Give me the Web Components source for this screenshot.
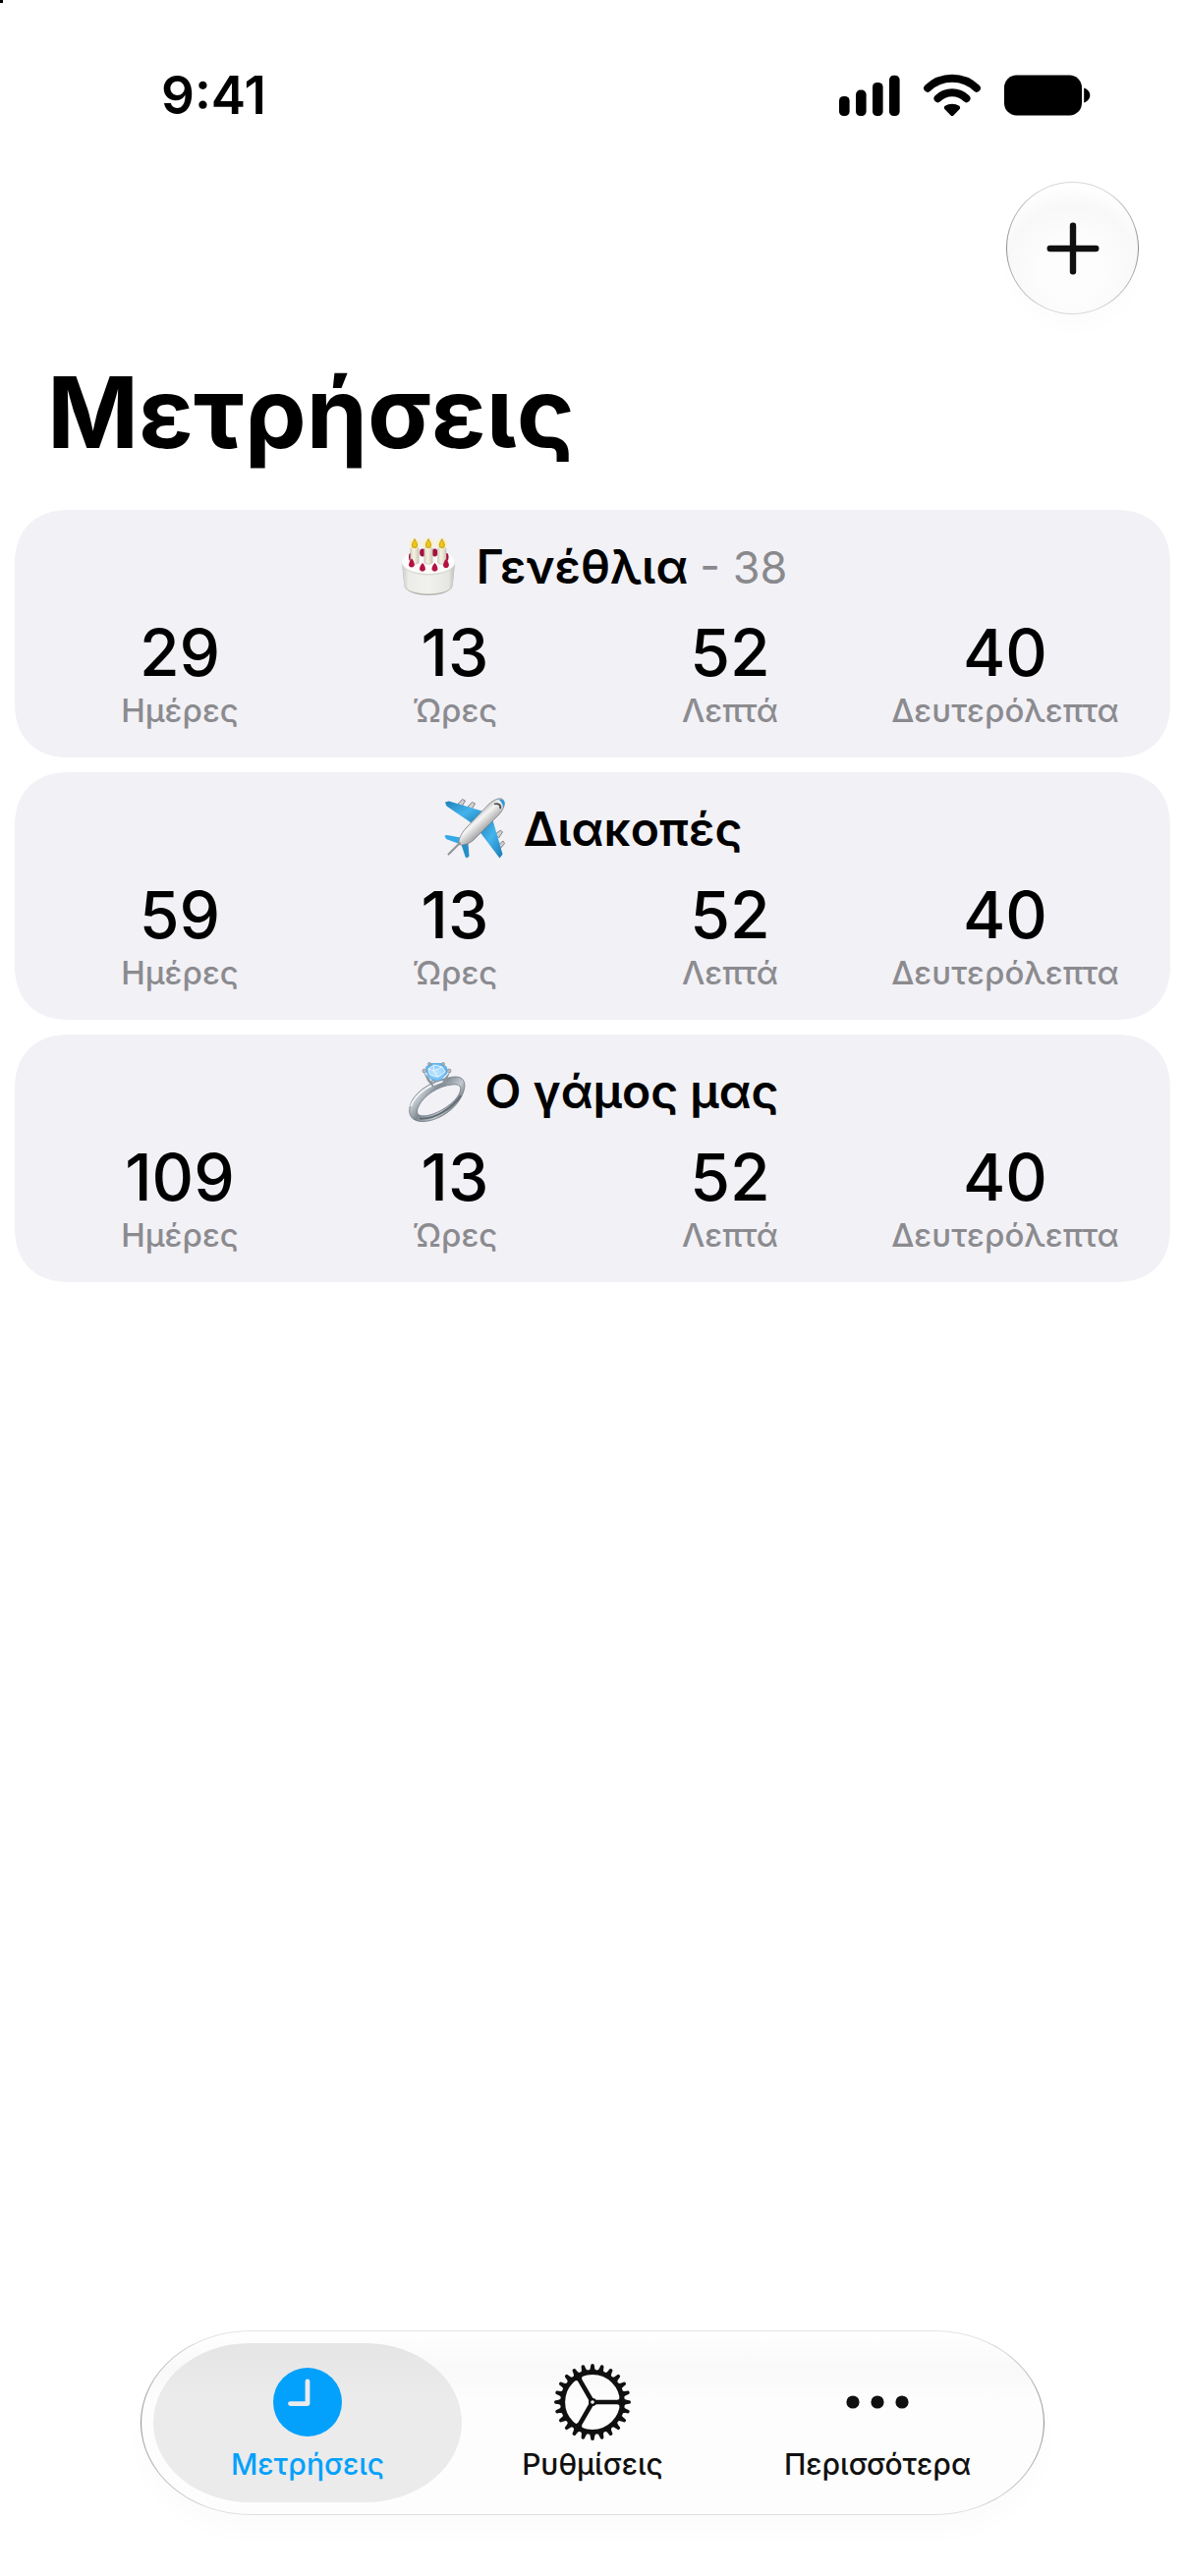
<!DOCTYPE html>
<html lang="el">
<head>
<meta charset="utf-8">
<meta name="viewport" content="width=device-width, initial-scale=1">
<title>Μετρήσεις</title>
<style>
  html, body { margin: 0; background: #fff; }
  body { font-family: Inter, "Noto Sans", sans-serif; color: #000; }
</style>
</head>
<body>
<countdown-app></countdown-app>

<script>
const define = (name, html) => {
  const template = document.createElement('template');
  template.innerHTML = html;
  customElements.define(name, class extends HTMLElement {
    constructor() {
      super();
      this.attachShadow({ mode: 'open' }).append(template.content.cloneNode(true));
    }
  });
};

define('status-bar', `
  <style>
    :host { display: flex; justify-content: space-between; align-items: center; padding: 65px 96px 56px 164px; }
    time { font-size: 53px; line-height: 64px; font-weight: 600; }
    .signs { display: flex; align-items: center; gap: 24px; }
    svg { display: block; }
  </style>
  <time>9:41</time>
  <div class="signs">
    <svg width="62" height="44" viewBox="0 0 62 44" aria-hidden="true">
      <rect x="0" y="23" width="10.6" height="20" rx="4.6"/>
      <rect x="17" y="16.600" width="10.600" height="26.400" rx="4.600"/>
      <rect x="34" y="9" width="10.600" height="34" rx="4.600"/>
      <rect x="51" y="1.700" width="10.600" height="41.300" rx="4.600"/>
    </svg>
    <svg width="58" height="44" viewBox="0 0 58 44" aria-hidden="true">
      <g fill="none" stroke="#000" stroke-width="8" stroke-linecap="round">
        <path d="M4.200 14.700C18 1.500 40 1.500 53.800 14.700"/>
        <path d="M14.500 25.200C22.600 17.400 35.400 17.400 43.500 25.200"/>
      </g>
      <path d="M21.600 36.300C20.500 35.200 20.600 33.500 21.800 32.700C26 30 32 30 36.200 32.700C37.400 33.500 37.500 35.200 36.400 36.300L30.400 42.400C29.600 43.200 28.400 43.200 27.600 42.400Z"/>
    </svg>
    <svg width="88" height="42" viewBox="0 0 88 42" aria-hidden="true">
      <rect x="0" y="0.500" width="79" height="41" rx="12.500"/>
      <path d="M81.200 13.500C84.800 14.600 87.300 17.600 87.300 21C87.300 24.400 84.800 27.400 81.200 28.500Z"/>
    </svg>
  </div>
`);

define('glass-add-button', `
  <style>
    :host { display: block; }
    button {
      display: grid; place-items: center; box-sizing: border-box; width: 135px; height: 135px; padding: 0;
      border: 1px solid transparent; border-radius: 50%;
      background:
        radial-gradient(circle at 50% 68%, #fdfdfd 28%, #f8f8f8 60%, #fff 78%) padding-box,
        linear-gradient(#dadada, #8e8e8e 50%, #dadada) border-box;
      box-shadow: 0 18px 24px -6px rgba(0, 0, 0, .015);
    }
  </style>
  <button type="button" aria-label="Προσθήκη">
    <svg width="54" height="54" viewBox="0 0 54 54" fill="none" stroke="#101010" stroke-width="6.400" stroke-linecap="round" aria-hidden="true"><path d="M27 3.700V50.300M3.700 27H50.300"/></svg>
  </button>
`);

define('time-cell', `
  <style>
    :host { display: flex; flex-direction: column; align-items: center; }
    .value { font-size: 66px; line-height: 78px; font-weight: 500; }
    .unit { font-size: 33px; line-height: 40px; font-weight: 500; color: #8b8b8f; }
  </style>
  <span class="value"><slot name="value"></slot></span>
  <span class="unit"><slot></slot></span>
`);

define('countdown-card', `
  <style>
    :host { display: block; padding: 28px; background: #f2f1f6; border-radius: 56px; corner-shape: superellipse(1.2); }
    header { display: flex; justify-content: center; align-items: center; gap: 18px; height: 60px; margin-bottom: 18px; }
    h2 { margin: 0; font-size: 48px; line-height: 60px; font-weight: 600; }
    ::slotted([slot=note]) { font-size: 45px; line-height: 40px; font-weight: 400; color: #89898d; }
    .cells { display: grid; grid-template-columns: repeat(4, 1fr); }
  </style>
  <header>
    <slot name="icon"></slot>
    <h2><slot name="title"></slot> <slot name="note"></slot></h2>
  </header>
  <div class="cells"><slot></slot></div>
`);

define('cake-icon', `
  <style>:host { display: block; } svg { display: block; }</style>
  <svg width="62" height="60" viewBox="0 0 62 60" aria-hidden="true">
    <defs>
      <linearGradient id="side" x1="0" x2="1"><stop offset="0" stop-color="#c9c9c3"/><stop offset=".12" stop-color="#ececE8"/><stop offset=".5" stop-color="#f1f1ee"/><stop offset=".88" stop-color="#e6e6e2"/><stop offset="1" stop-color="#bcbcb6"/></linearGradient>
      <linearGradient id="wax" x1="0" x2="1"><stop offset="0" stop-color="#d8d4c4"/><stop offset=".4" stop-color="#f6f3e6"/><stop offset="1" stop-color="#cfcab8"/></linearGradient>
      <radialGradient id="glow"><stop offset="0" stop-color="#ffe96a"/><stop offset=".5" stop-color="#fff09a" stop-opacity=".7"/><stop offset="1" stop-color="#fff3b0" stop-opacity="0"/></radialGradient>
    </defs>
    <path d="M4 25L6.300 49C7.500 55 18 59 31 59S54.500 55 55.700 49L58 25Z" fill="#b4b4ae"/>
    <path d="M4 25L6.300 48C7.500 54 18 57.500 31 57.500S54.500 54 55.700 48L58 25Z" fill="url(#side)"/>
    <ellipse cx="31" cy="26" rx="27.300" ry="12.500" fill="#d9d9d4"/>
    <ellipse cx="31" cy="25" rx="27" ry="12" fill="#fcfcfb"/>
    <g fill="#a5123c"><ellipse cx="25" cy="15.500" rx="2.900" ry="4"/><ellipse cx="37.500" cy="15.500" rx="2.900" ry="4"/><ellipse cx="13" cy="20" rx="2" ry="4"/><ellipse cx="49.500" cy="20" rx="2" ry="4"/></g>
    <g fill="url(#wax)" stroke="#bdb9aa" stroke-width=".5">
      <path d="M12.800 11Q17 8.500 21.200 11V26Q17 29 12.800 26Z"/>
      <path d="M26.800 11Q31 8.500 35.200 11V26Q31 29 26.800 26Z"/>
      <path d="M40.600 11Q44.800 8.500 49 11V26Q44.800 29 40.600 26Z"/>
    </g>
    <g fill="url(#glow)"><circle cx="17" cy="6.500" r="7"/><circle cx="31" cy="6.500" r="7"/><circle cx="44.800" cy="6.500" r="7"/></g>
    <g fill="#efc51c" stroke="#ba9214" stroke-width=".8">
      <path d="M17 1.500C18 4 19.600 5.500 19.600 8A2.600 2.600 0 0 1 14.400 8C14.400 5.500 16 4 17 1.500Z"/>
      <path d="M31 1.500C32 4 33.600 5.500 33.600 8A2.600 2.600 0 0 1 28.400 8C28.400 5.500 30 4 31 1.500Z"/>
      <path d="M44.800 1.500C45.800 4 47.400 5.500 47.400 8A2.600 2.600 0 0 1 42.200 8C42.200 5.500 43.800 4 44.800 1.500Z"/>
    </g>
    <g fill="#b51243">
      <path d="M14 21.500C15.500 23 17 26 16.800 28.300A3 3 0 0 1 11 28.300C11 26 12.500 23 14 21.500Z"/>
      <path d="M25 26C26.500 27.500 28 30 27.900 32.300A3 3 0 0 1 22 32.300C22 30 23.500 27.500 25 26Z"/>
      <path d="M37.500 26C39 27.500 40.500 30 40.400 32.300A3 3 0 0 1 34.500 32.300C34.500 30 36 27.500 37.500 26Z"/>
      <path d="M49 22C50.500 23.500 52 26.500 51.900 28.800A3 3 0 0 1 46 28.800C46 26.500 47.500 23.500 49 22Z"/>
    </g>
  </svg>
`);

define('plane-icon', `
  <style>:host { display: block; } svg { display: block; }</style>
  <svg width="64" height="64" viewBox="0 0 64 64" aria-hidden="true">
    <defs>
      <linearGradient id="body" x1=".3" y1=".3" x2=".65" y2=".7"><stop offset="0" stop-color="#a3a3a3"/><stop offset=".4" stop-color="#f5f5f5"/><stop offset="1" stop-color="#8e8e90"/></linearGradient>
      <linearGradient id="wing" x1="0" y1="0" x2="1" y2="1"><stop offset="0" stop-color="#1c7fb9"/><stop offset=".5" stop-color="#45b4ec"/><stop offset="1" stop-color="#1679b4"/></linearGradient>
    </defs>
    <g fill="#cfcfcf" stroke="#87878a" stroke-width="1">
      <path d="M15 6.500L19.500 1.500L22.500 3L19 9Z"/><path d="M25 9L29.500 4.500L32.500 6L29 12Z"/>
      <path d="M53 37L58.500 33L60.500 35L56.500 41Z"/><path d="M56 48L61 44L62.500 46.500L58.500 51.500Z"/>
    </g>
    <path d="M2 4.500L6 3.500L43 14.500L30 26.500L3.500 8.500Z" fill="url(#wing)"/>
    <path d="M50 21L60.500 57.500L57.500 61.500L36 33Z" fill="url(#wing)"/>
    <path d="M1.500 38.500L4 38L23 41.500L16.500 47L3 42Z" fill="#35a8e6"/>
    <path d="M18 46L25 41L26.500 59.500L24 61.500L22.500 60Z" fill="#278fc8"/>
    <path d="M60.500 1.500C64 4.500 62 11.500 57 17L31 43C26 47.500 19 49 16 47.500C15 44 18 37 23 31L46 7C51 2 57.500-.500 60.500 1.500Z" fill="url(#body)" stroke="#77777a" stroke-width=".7"/>
    <path d="M59 1.500C62.500 2 63.500 6 61.500 10C60.500 6 59 3.500 56 1.500Z" fill="#2d9bd7"/>
    <path d="M52 6.500C56 5.300 59 7 58 11" fill="none" stroke="#4c4c50" stroke-width="1.800"/>
    <path d="M17 46L5.500 57.500" fill="none" stroke="#939395" stroke-width="2" stroke-linecap="round"/>
  </svg>
`);

define('ring-icon', `
  <style>:host { display: block; } svg { display: block; overflow: visible; }</style>
  <svg width="62" height="64" viewBox="0 -2 62 64" aria-hidden="true">
    <defs>
      <linearGradient id="band" x1="0" y1="0" x2="1" y2=".6"><stop offset="0" stop-color="#77818a"/><stop offset=".25" stop-color="#dde2e6"/><stop offset=".5" stop-color="#7f8992"/><stop offset=".75" stop-color="#c3c9ce"/><stop offset="1" stop-color="#5a646d"/></linearGradient>
      <radialGradient id="gem"><stop offset="0" stop-color="#c9ecff"/><stop offset=".5" stop-color="#8fd0fb"/><stop offset="1" stop-color="#5eb2ee"/></radialGradient>
    </defs>
    <path fill-rule="evenodd" fill="url(#band)" stroke="#5f6972" stroke-width=".7" d="M43 16C57 12 62 20 57 32C51 48 31 61 15 60.500C3 60 0 51 5 40C11 28 27 19 43 16ZM46 23C33 24 17 34 12 45C8 53 12 56 21 54.500C34 52 49 41 53 33C57 25 54 22 46 23Z"/>
    <path d="M4 45C9 32 24 22 40 19" fill="none" stroke="#f3f5f6" stroke-width="1.800"/>
    <path d="M13 57.500C29 59 47 46 55 34" fill="none" stroke="#5f6871" stroke-width="1.800"/>
    <path d="M17 10L23 17L28 25H34L38 17L44 10L40 20L35 26L26 25L21 19Z" fill="#89949b"/>
    <path d="M19 5L25 1H35L41 5V12L35 18L28 20L21 15Z" fill="url(#gem)"/>
    <path d="M22 7L28 3L36 5L39 10L32 15L24 13ZM28 3L27 9L36 5M27 9L32 15M27 9L22 7" fill="#b5e2ff" fill-opacity=".5" stroke="#e4f6ff" stroke-width="1"/>
    <g fill="#b4bcc2" stroke="#707a82" stroke-width=".6"><circle cx="18" cy="9" r="2"/><circle cx="43" cy="9" r="2"/><circle cx="23" cy="2" r="1.500"/><circle cx="37" cy="2" r="1.500"/><circle cx="27" cy="20" r="1.800"/></g>
  </svg>
`);

const tooth = '<path d="M-3.700-31.500C-2.500-33-2-35-1.800-37.500Q-1.600-39 0-39T1.800-37.500C2-35 2.500-33 3.700-31.500Z"/>';
const teeth = Array.from({ length: 24 }, (_, i) => `<g transform="rotate(${i * 15})">${tooth}</g>`).join('');
const spokes = [0, 120, 240].map(a => `<path transform="rotate(${a})" d="M2-2.300H25Q27.500-2.300 28-5.500L30 0L28 5.500Q27.500 2.300 25 2.300H2Z"/>`).join('');

define('clock-icon', `
  <style>:host { display: block; } svg { display: block; }</style>
  <svg width="80" height="80" viewBox="-40 -40 80 80" aria-hidden="true">
    <circle r="35" fill="#03a1fb"/>
    <path d="M0-21V1.600H-17.500" fill="none" stroke="#ebebeb" stroke-width="4.800" stroke-linecap="round" stroke-linejoin="round"/>
  </svg>
`);
define('gear-icon', `
  <style>:host { display: block; } svg { display: block; }</style>
  <svg width="80" height="80" viewBox="-40 -40 80 80" fill="#101010" aria-hidden="true">
    <circle r="30.400" fill="none" stroke="#101010" stroke-width="5"/>
    ${teeth}${spokes}
    <circle r="4"/><circle r="1.800" fill="#fff"/>
  </svg>
`);
define('more-icon', `
  <style>:host { display: block; } svg { display: block; }</style>
  <svg width="80" height="80" viewBox="-40 -40 80 80" fill="#101010" aria-hidden="true">
    <circle cx="-25" r="6.600"/><circle r="6.600"/><circle cx="25" r="6.600"/>
  </svg>
`);

define('tab-item', `
  <style>
    :host { display: block; flex: 1; color: #101010; }
    button {
      position: relative; isolation: isolate; display: flex; flex-direction: column; align-items: center; gap: 5px;
      width: 100%; margin: 0; padding: 32px 0 33px; border: 0; background: none; color: inherit;
      font: 500 30px/36px Inter, "Noto Sans", sans-serif; white-space: nowrap;
    }
    :host([selected]) { color: #03a1fb; }
    :host([selected]) button::before {
      content: ""; position: absolute; z-index: -1; inset: 12px -12px;
      border-radius: 98px / 81px; background: linear-gradient(#e6e5e6, #ebebeb 35%);
    }
  </style>
  <button type="button"><slot name="icon"></slot><span><slot></slot></span></button>
`);

define('tab-bar', `
  <style>
    :host { display: block; padding: 0 143px 62px; }
    nav {
      display: flex; padding: 0 24px; border: 1px solid transparent; border-radius: 112px / 94px;
      background:
        linear-gradient(#fff, #f9f9f9 20%, #fafafa 28%, #fdfdfd 36%, #fdfdfd) padding-box,
        linear-gradient(#e6e6e6, #8e8e8e 50%, #e0e0e0) border-box;
      box-shadow: 0 18px 30px -4px rgba(0, 0, 0, .018);
    }
  </style>
  <nav><slot></slot></nav>
`);

define('countdown-app', `
  <style>
    :host { display: flex; flex-direction: column; min-height: 100vh; }
    .mark { position: absolute; top: 0; left: 0; width: 3px; height: 3px; background: #000; }
    .toolbar { display: flex; justify-content: flex-end; padding: 0 47px; }
    h1 { margin: 40px 48px 39px; font-size: 100px; line-height: 120px; font-weight: 700; }
    main { display: flex; flex-direction: column; gap: 15px; flex: 1; padding: 0 15px; }
  </style>
  <div class="mark"></div>
  <status-bar></status-bar>
  <div class="toolbar"><glass-add-button></glass-add-button></div>
  <h1>Μετρήσεις</h1>
  <main>
    <countdown-card>
      <cake-icon slot="icon"></cake-icon><span slot="title">Γενέθλια</span><span slot="note">- 38</span>
      <time-cell><span slot="value">29</span>Ημέρες</time-cell>
      <time-cell><span slot="value">13</span>Ώρες</time-cell>
      <time-cell><span slot="value">52</span>Λεπτά</time-cell>
      <time-cell><span slot="value">40</span>Δευτερόλεπτα</time-cell>
    </countdown-card>
    <countdown-card>
      <plane-icon slot="icon"></plane-icon><span slot="title">Διακοπές</span>
      <time-cell><span slot="value">59</span>Ημέρες</time-cell>
      <time-cell><span slot="value">13</span>Ώρες</time-cell>
      <time-cell><span slot="value">52</span>Λεπτά</time-cell>
      <time-cell><span slot="value">40</span>Δευτερόλεπτα</time-cell>
    </countdown-card>
    <countdown-card>
      <ring-icon slot="icon"></ring-icon><span slot="title">Ο γάμος μας</span>
      <time-cell><span slot="value">109</span>Ημέρες</time-cell>
      <time-cell><span slot="value">13</span>Ώρες</time-cell>
      <time-cell><span slot="value">52</span>Λεπτά</time-cell>
      <time-cell><span slot="value">40</span>Δευτερόλεπτα</time-cell>
    </countdown-card>
  </main>
  <tab-bar>
    <tab-item selected><clock-icon slot="icon"></clock-icon>Μετρήσεις</tab-item>
    <tab-item><gear-icon slot="icon"></gear-icon>Ρυθμίσεις</tab-item>
    <tab-item><more-icon slot="icon"></more-icon>Περισσότερα</tab-item>
  </tab-bar>
`);
</script>
</body>
</html>
